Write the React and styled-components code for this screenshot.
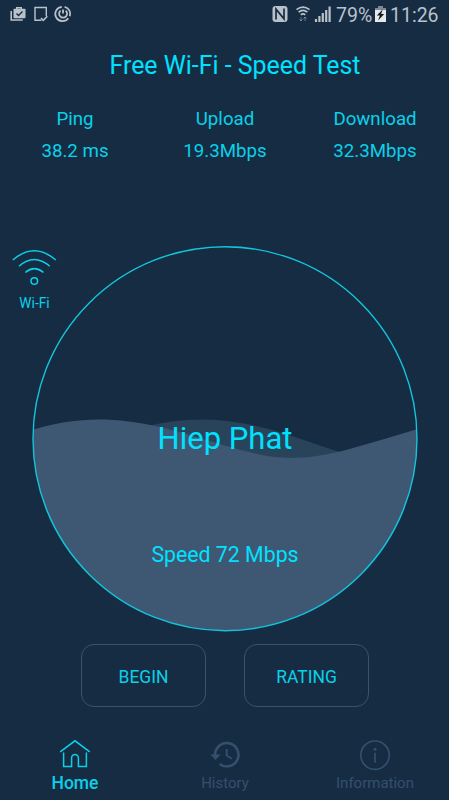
import React from "react";
import styled, { createGlobalStyle } from "styled-components";

const colors = {
  background: "#162c43",
  cyan: "#00e1ff",
  cyanSoft: "#0bd0e9",
  wave: "#3e5874",
  waveBack: "#29435b",
  muted: "#34506e",
  status: "#b9c2cb",
};

const GlobalStyle = createGlobalStyle`
  * {
    box-sizing: border-box;
  }
  body {
    margin: 0;
    background: ${colors.background};
    font-family: Roboto, "Liberation Sans", sans-serif;
  }
`;

const Screen = styled.div`
  display: flex;
  flex-direction: column;
  width: 449px;
  height: 800px;
  overflow: hidden;
  background: ${colors.background};
  color: ${colors.cyan};
`;

const StatusBar = styled.div`
  display: flex;
  justify-content: space-between;
  height: 30px;
  padding: 0 9px 0 10px;
  color: ${colors.status};
`;

const StatusGroup = styled.div`
  display: flex;
  align-items: center;
  height: 30px;
`;

const StatusText = styled.span`
  padding-top: 2px;
  font-size: 19.5px;
  line-height: 30px;
  white-space: nowrap;
  width: ${(props) => props.$width}px;
`;

const Title = styled.h1`
  margin: 19px 0 0;
  padding-left: 21px;
  font-size: 24.9px;
  font-weight: 400;
  line-height: 34px;
  text-align: center;
  white-space: nowrap;
`;

const Stats = styled.div`
  display: grid;
  grid-template-columns: repeat(3, 150px);
  margin-top: 20px;
`;

const Stat = styled.div`
  color: ${colors.cyanSoft};
  font-size: 18.7px;
  line-height: 32px;
  text-align: center;
`;

const Gauge = styled.div`
  position: relative;
  width: 386px;
  height: 388px;
  margin: 78px 0 0 32px;
`;

const GaugeArt = styled.svg`
  display: block;
`;

const GaugeText = styled.div`
  position: absolute;
  left: 0;
  right: 0;
  top: ${(props) => props.$top}px;
  font-size: ${(props) => props.$size}px;
  line-height: 40px;
  text-align: center;
`;

const WifiBadge = styled.div`
  position: absolute;
  left: -22px;
  top: 3px;
  width: 49px;
  color: ${colors.cyanSoft};
  font-size: 13.8px;
  line-height: 18px;
  text-align: center;

  svg {
    display: block;
  }
`;

const Actions = styled.div`
  display: flex;
  gap: 38px;
  margin: 11px 0 0 81px;
`;

const ActionButton = styled.button`
  width: 125px;
  height: 63px;
  padding: 2px 0 0;
  border: 1px solid #38536f;
  border-radius: 13px;
  background: transparent;
  color: ${colors.cyanSoft};
  font-family: inherit;
  font-size: 17.5px;
`;

const TabBar = styled.nav`
  display: grid;
  grid-template-columns: repeat(3, 150px);
  height: 71px;
  margin-top: auto;
`;

const Tab = styled.div`
  display: flex;
  flex-direction: column;
  align-items: center;
  padding-top: 10px;
  color: ${(props) => (props.$active ? colors.cyanSoft : colors.muted)};
`;

const TabLabel = styled.span`
  margin-top: 1px;
  font-size: ${(props) => (props.$active ? 17.5 : 15)}px;
  font-weight: ${(props) => (props.$active ? 500 : 400)};
  line-height: 22px;
`;

const NotificationIcons = () => (
  <svg width="64" height="30" viewBox="0 0 64 30" fill="none" stroke="currentColor">
    <path d="M1.2 11v9h11.5" strokeWidth="1.6" />
    <path d="M6.7 9V7.7h4.6V9" strokeWidth="1.4" />
    <rect x="3.5" y="8.8" width="12" height="9.5" rx="0.8" fill="currentColor" stroke="none" />
    <path d="m6.5 13.5 2 2 4-4" stroke={colors.background} strokeWidth="1.4" />
    <path d="M31.5 20.3H25V7.5h11.3V16" strokeWidth="1.4" />
    <path d="m31 18 2.3 2.3 4-4" strokeWidth="1.6" />
    <path d="M51.8 6.8a7.2 7.2 0 1 0 6.5 11.4" strokeWidth="1.7" />
    <path d="M54.6 6.8a7.2 7.2 0 0 1 5.2 9.5" strokeWidth="1.7" />
    <path d="M50.6 10.6a4 4 0 1 0 5 0M53 9.5v4" strokeWidth="1.8" />
  </svg>
);

const SignalIcons = () => (
  <svg width="64" height="30" viewBox="0 0 64 30" fill="none" stroke="currentColor">
    <rect x="0.5" y="6" width="15" height="16" rx="3" fill="currentColor" stroke="none" />
    <path d="M4 19.5V9.2l8 9.6V8.5" stroke={colors.background} strokeWidth="1.7" />
    <path d="M24.5 9.6q6.5-5 13 0M26.6 12.2q4.4-3.8 8.8 0M28.8 14.8q2.2-2 4.4 0" strokeWidth="1.7" />
    <path d="M29 17v4m-1.6-1.6L29 21l1.6-1.6M33 21v-4m-1.6 1.6L33 17l1.6 1.6" strokeWidth="1" opacity="0.5" />
    <path d="M44 22v-3M47.4 22v-6M50.8 22v-9M54.2 22V10M57.6 22V6.5" strokeWidth="2.2" />
  </svg>
);

const BatteryIcon = () => (
  <svg width="16" height="30" viewBox="0 0 16 30">
    <path d="M4.5 6h4v2H12v14H1V8h3.5z" fill="#e6e8ea" />
    <path d="M4.5 6h4v2H12v2H1V8h3.5z" fill="#7c8792" />
    <path d="m8.8 9.2-6 6.2h3.1l-1.8 5 6.1-6.5H7.1z" fill="#101820" />
  </svg>
);

const WifiIcon = () => (
  <svg width="48" height="46" viewBox="0 0 48 46" fill="none" stroke="currentColor" strokeWidth="1.5">
    <path d="M2.8 12q21.3-18.5 43 0M9 18.3q15-13.5 30.8 0M15.3 24.5q9-7.8 18.2 0" />
    <circle cx="24.3" cy="33" r="3.3" />
  </svg>
);

const HomeIcon = () => (
  <svg width="32" height="32" viewBox="0 0 32 32" fill="none" stroke="currentColor" strokeWidth="1.5">
    <path d="M1.2 12.8 16 1.8l14.8 11" />
    <path d="M4.6 13.5v14h8v-8.6a3.4 3.4 0 0 1 6.8 0v8.6h8v-14" />
  </svg>
);

const HistoryIcon = () => (
  <svg width="32" height="32" viewBox="0 0 32 32" fill="none" stroke="currentColor">
    <path d="M6.2 17.5a11.7 11.7 0 1 1 4.4 7.5" strokeWidth="2.6" />
    <path d="M1.3 15.6h10.4l-5.2 5.3z" fill="currentColor" stroke="none" />
    <path d="M17.7 10v6.5l5.2 3.3" strokeWidth="1.9" />
  </svg>
);

const InfoIcon = () => (
  <svg width="32" height="32" viewBox="0 0 32 32" fill="none" stroke="currentColor" strokeWidth="1.7">
    <circle cx="16" cy="16.2" r="14.2" />
    <path d="M16 13.7v10" />
    <circle cx="16" cy="10.2" r="1.5" fill="currentColor" stroke="none" />
  </svg>
);

const stats = [
  { label: "Ping", value: "38.2 ms" },
  { label: "Upload", value: "19.3Mbps" },
  { label: "Download", value: "32.3Mbps" },
];

const tabs = [
  { label: "Home", icon: <HomeIcon />, active: true },
  { label: "History", icon: <HistoryIcon /> },
  { label: "Information", icon: <InfoIcon /> },
];

export default function App() {
  return (
    <Screen>
      <GlobalStyle />
      <StatusBar>
        <StatusGroup>
          <NotificationIcons />
        </StatusGroup>
        <StatusGroup>
          <SignalIcons />
          <StatusText $width={38}>79%</StatusText>
          <BatteryIcon />
          <StatusText $width={50}>11:26</StatusText>
        </StatusGroup>
      </StatusBar>

      <Title>Free Wi-Fi - Speed Test</Title>

      <Stats>
        {stats.map((stat) => (
          <Stat key={stat.label}>
            <div>{stat.label}</div>
            <div>{stat.value}</div>
          </Stat>
        ))}
      </Stats>

      <Gauge>
        <GaugeArt width="386" height="388" viewBox="0 0 386 388">
          <defs>
            <clipPath id="dial">
              <circle cx="193" cy="193.7" r="192" />
            </clipPath>
          </defs>
          <g clipPath="url(#dial)">
            <path d="M100 185C140 173 180 171 220 180S280 199 312 208V230H100Z" fill={colors.waveBack} />
            <path
              d="M0 185C42 172 80 171 128 182S220 213 258 213S320 203 386 184V388H0Z"
              fill={colors.wave}
            />
          </g>
          <circle cx="193" cy="193.7" r="192" fill="none" stroke="#13c4dc" strokeWidth="1.4" />
        </GaugeArt>
        <GaugeText $top={174} $size={31}>
          Hiep Phat
        </GaugeText>
        <GaugeText $top={290} $size={21.3}>
          Speed 72 Mbps
        </GaugeText>
        <WifiBadge>
          <WifiIcon />
          Wi-Fi
        </WifiBadge>
      </Gauge>

      <Actions>
        <ActionButton>BEGIN</ActionButton>
        <ActionButton>RATING</ActionButton>
      </Actions>

      <TabBar>
        {tabs.map((tab) => (
          <Tab key={tab.label} $active={tab.active}>
            {tab.icon}
            <TabLabel $active={tab.active}>{tab.label}</TabLabel>
          </Tab>
        ))}
      </TabBar>
    </Screen>
  );
}
